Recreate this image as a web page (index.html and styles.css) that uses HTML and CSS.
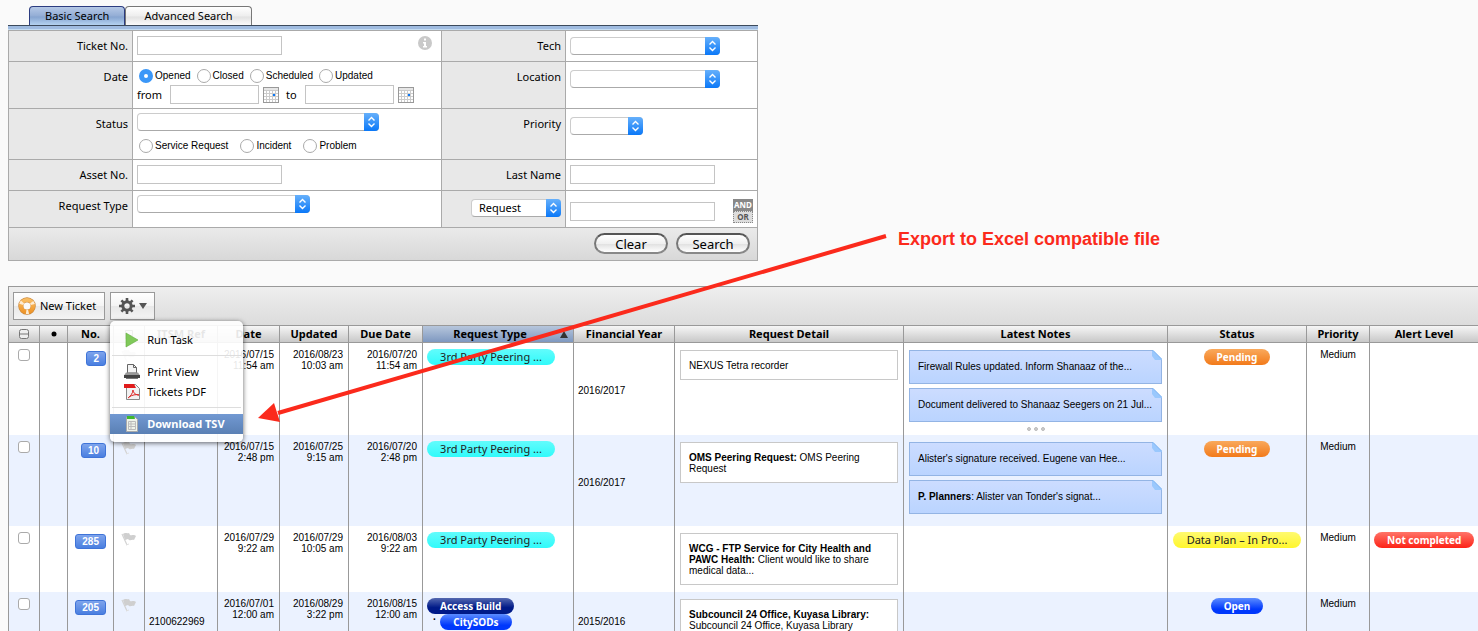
FILE: index.html
```
<!DOCTYPE html>
<html lang="en">
<head>
  <meta charset="UTF-8" />
  <title>Tickets</title>
  <link rel="stylesheet" href="styles.css">
</head>
<body>
  <svg class="sprite" width="0" height="0" aria-hidden="true">
    <defs>
      <linearGradient id="blue" x1="0" y1="0" x2="0" y2="1">
        <stop offset="0" stop-color="#66b0fb" />
        <stop offset="1" stop-color="#0a78f8" />
      </linearGradient>
      <linearGradient id="ring" x1="0" y1="0" x2="0" y2="1">
        <stop offset="0" stop-color="#f8bc62" />
        <stop offset="1" stop-color="#ef962a" />
      </linearGradient>
      <symbol id="updown" viewBox="0 0 15 18">
        <path d="M0 0h11a4 4 0 0 1 4 4v10a4 4 0 0 1-4 4H0z" fill="url(#blue)" />
        <path d="M4.500 7.500l3-3 3 3M4.500 10.500l3 3 3-3" fill="none" stroke="#fff" stroke-width="1.400" />
      </symbol>
      <symbol id="calendar" viewBox="0 0 16 16">
        <rect x=".5" y=".5" width="15" height="15" fill="#fff" stroke="#999" />
        <path d="M1 2h14" stroke="#e6e6e6" stroke-width="2" />
        <path d="M1 3.500h14M1 6.500h14M1 9.500h14M1 12.500h14M3.500 3v12M6.500 3v12M9.500 3v12M12.500 3v12" stroke="#ccc" />
        <rect x="10" y="7" width="2" height="2" fill="#0a78f8" />
      </symbol>
      <symbol id="flag" viewBox="0 0 16 15">
        <path d="M1 2l5 11" stroke="#d2d2d2" stroke-width="1.200" />
        <path d="M2 2c2-2 4 0 6-1l1 2c2 1 4-1 6 1l-2 4c-2-1-3 1-5 0l-1-1c-1 0-2 1-3 1z" fill="#cfcfcf" />
        <path d="M5 13l3-1" stroke="#e0e0e0" />
      </symbol>
      <symbol id="fold" viewBox="0 0 10 10">
        <path d="M0 0h10v10z" class="cut" />
        <path d="M0 0h1l9 9v1H3L0 6z" fill="#9ac8fd" />
        <path d="M0 .5h1l9 9" fill="none" stroke="#84b6f0" />
      </symbol>
    </defs>
  </svg>

  <form class="search">
    <div class="tabs">
      <button type="button" class="tab active">Basic Search</button>
      <button type="button" class="tab">Advanced Search</button>
    </div>
    <div class="tab-bar"></div>

    <div class="fields">
      <div class="name"><label for="ticket-no">Ticket No.</label></div>
      <div class="value split">
        <input type="text" class="box" id="ticket-no">
        <svg class="info" width="14" height="14" viewBox="0 0 14 14"><circle cx="7" cy="7" r="7" fill="#c9c9c9" /><path d="M6 2.500h2v2H6zM5 6h3v4h1v1.500H5V10h1V7.500H5z" fill="#fff" /></svg>
      </div>
      <div class="name"><label for="tech">Tech</label></div>
      <div class="value low">
        <span class="select"><select id="tech" class="medium"><option></option></select><svg width="15" height="18"><use href="#updown" /></svg></span>
      </div>

      <div class="name">Date</div>
      <div class="value date">
        <div class="radios">
          <label><input type="radio" name="date" checked>Opened</label>
          <label><input type="radio" name="date">Closed</label>
          <label><input type="radio" name="date">Scheduled</label>
          <label><input type="radio" name="date">Updated</label>
        </div>
        <div class="range">
          <label for="from">from</label>
          <input type="text" class="box short" id="from">
          <svg width="16" height="16"><use href="#calendar" /></svg>
          <label for="to">to</label>
          <input type="text" class="box short" id="to">
          <svg width="16" height="16"><use href="#calendar" /></svg>
        </div>
      </div>
      <div class="name"><label for="location">Location</label></div>
      <div class="value lower">
        <span class="select"><select id="location" class="medium"><option></option></select><svg width="15" height="18"><use href="#updown" /></svg></span>
      </div>

      <div class="name"><label for="status">Status</label></div>
      <div class="value status">
        <span class="select"><select id="status" class="wide"><option></option></select><svg width="15" height="18"><use href="#updown" /></svg></span>
        <div class="radios spaced">
          <label><input type="radio" name="kind">Service Request</label>
          <label><input type="radio" name="kind">Incident</label>
          <label><input type="radio" name="kind">Problem</label>
        </div>
      </div>
      <div class="name"><label for="priority">Priority</label></div>
      <div class="value lower">
        <span class="select"><select id="priority" class="small"><option></option></select><svg width="15" height="18"><use href="#updown" /></svg></span>
      </div>

      <div class="name"><label for="asset-no">Asset No.</label></div>
      <div class="value"><input type="text" class="box" id="asset-no"></div>
      <div class="name"><label for="last-name">Last Name</label></div>
      <div class="value"><input type="text" class="box" id="last-name"></div>

      <div class="name"><label for="request-type">Request Type</label></div>
      <div class="value status">
        <span class="select"><select id="request-type" class="large"><option></option></select><svg width="15" height="18"><use href="#updown" /></svg></span>
      </div>
      <div class="name">
        <span class="select"><select class="field" aria-label="Field"><option>Request</option></select><svg width="15" height="18"><use href="#updown" /></svg></span>
      </div>
      <div class="value split middle">
        <input type="text" class="box" aria-label="Request">
        <div class="andor"><button type="button" class="on">AND</button><button type="button">OR</button></div>
      </div>
    </div>

    <div class="actions">
      <button type="reset">Clear</button>
      <button type="submit">Search</button>
    </div>
  </form>

  <section class="results">
    <div class="toolbar">
      <button type="button" class="tool">
        <svg width="18" height="18" viewBox="0 0 18 18">
          <circle cx="9" cy="9" r="6" fill="none" stroke="#c9863a" stroke-width="5.500" />
          <circle cx="9" cy="9" r="6" fill="none" stroke="url(#ring)" stroke-width="4.200" />
          <circle cx="9" cy="9" r="6" fill="none" stroke="#fdebd2" stroke-width="4.200" stroke-dasharray="2.500 10.070" stroke-dashoffset="5" />
          <circle cx="9" cy="9" r="3.500" fill="#fafafa" />
        </svg>
        New Ticket
      </button>
      <div class="menu-wrap">
        <button type="button" class="tool gear" aria-label="Actions">
          <svg width="16" height="16" viewBox="0 0 16 16">
            <circle cx="8" cy="8" r="4.200" fill="none" stroke="#555" stroke-width="3" />
            <path d="M8 0v3M8 13v3M0 8h3M13 8h3M2.400 2.400l2 2M11.600 11.600l2 2M2.400 13.600l2-2M11.600 4.400l2-2" stroke="#555" stroke-width="2.600" />
          </svg>
          <svg width="8" height="6" viewBox="0 0 8 6"><path d="M0 0h8L4 6z" fill="#555" /></svg>
        </button>
        <div class="menu">
          <button type="button">
            <svg width="16" height="16" viewBox="0 0 16 16"><path d="M2 1l12 7-12 7z" fill="#80c95a" stroke="#62ad3e" stroke-width=".6" /></svg>
            Run Task
          </button>
          <hr>
          <button type="button">
            <svg width="16" height="16" viewBox="0 0 16 16"><path d="M3.500 9V.5h6l3 3V9z" fill="#f4f4f4" stroke="#666" /><path d="M9.500.5v3h3" fill="none" stroke="#666" /><path d="M2 8.500h12l2 3H0z" fill="#999" /><path d="M0 11h16v3H0z" fill="#444" /><path d="M2 14.500h12" stroke="#777" /></svg>
            Print View
          </button>
          <button type="button">
            <svg width="16" height="16" viewBox="0 0 16 16"><path d="M2.500.5h9l4 4v11h-13z" fill="#f2f2f2" stroke="#888" /><path d="M0 0h10l2 4H0z" fill="#e01b1b" /><path d="M4 14c2-1 5-5 5-8 0 3 3 5 6 5-3-1-7 0-10 2" fill="none" stroke="#d22" /></svg>
            Tickets PDF
          </button>
          <hr>
          <button type="button" class="selected">
            <svg width="16" height="16" viewBox="0 0 16 16"><path d="M2.500 1.500h9l2 2v12h-11z" fill="#eef3ea" stroke="#aaa" /><path d="M3 0h7l1 3H3z" fill="#3fb82f" /><path d="M4.500 5.500h7v8h-7zM4.500 8h7M4.500 10.500h7M7 5.500v8" fill="none" stroke="#bbb" /></svg>
            Download TSV
          </button>
        </div>
      </div>
    </div>

    <table>
      <colgroup>
        <col class="c-check"><col class="c-dot"><col class="c-no"><col class="c-flag"><col class="c-ref">
        <col class="c-date"><col class="c-updated"><col class="c-due"><col class="c-type"><col class="c-year">
        <col class="c-detail"><col class="c-notes"><col class="c-status"><col class="c-priority"><col>
      </colgroup>
      <thead>
        <tr>
          <th><svg width="10" height="10" viewBox="0 0 10 10"><rect x=".5" y=".5" width="9" height="9" rx="2" fill="#eee" stroke="#777" /><path d="M1 5h8" stroke="#777" /></svg></th>
          <th><svg width="6" height="6" viewBox="0 0 6 6"><circle cx="3" cy="3" r="2.500" /></svg></th>
          <th>No.</th>
          <th><svg width="8" height="9" viewBox="0 0 8 9"><path d="M.5 9V.5h7v5h-7" fill="none" stroke="#555" /></svg></th>
          <th>ITSM Ref</th>
          <th>Date</th>
          <th>Updated</th>
          <th>Due Date</th>
          <th class="sorted"><span>Request Type</span><svg width="8" height="7" viewBox="0 0 8 7"><path d="M0 7h8L4 0z" fill="#333" /></svg></th>
          <th>Financial Year</th>
          <th>Request Detail</th>
          <th>Latest Notes</th>
          <th>Status</th>
          <th>Priority</th>
          <th>Alert Level</th>
        </tr>
      </thead>
      <tbody>
        <tr>
          <td class="check"><input type="checkbox" aria-label="Ticket 2"></td>
          <td></td>
          <td class="no"><a href="#" class="badge">2</a></td>
          <td class="flag"><svg width="16" height="15"><use href="#flag" /></svg></td>
          <td class="mid"></td>
          <td class="when">2016/07/15<br>11:54 am</td>
          <td class="when">2016/08/23<br>10:03 am</td>
          <td class="when">2016/07/20<br>11:54 am</td>
          <td class="type"><span class="pill cyan">3rd Party Peering ...</span></td>
          <td class="mid">2016/2017</td>
          <td class="detail"><div class="card">NEXUS Tetra recorder</div></td>
          <td class="notes">
            <div class="note">Firewall Rules updated. Inform Shanaaz of the...<svg width="10" height="10"><use href="#fold" /></svg></div>
            <div class="note">Document delivered to Shanaaz Seegers on 21 Jul...<svg width="10" height="10"><use href="#fold" /></svg></div>
            <svg class="more" width="18" height="4" viewBox="0 0 18 4"><g fill="#ccc" stroke="#bbb"><circle cx="2" cy="2" r="1.500" /><circle cx="9" cy="2" r="1.500" /><circle cx="16" cy="2" r="1.500" /></g></svg>
          </td>
          <td class="center"><span class="pill orange">Pending</span></td>
          <td class="center">Medium</td>
          <td></td>
        </tr>
        <tr>
          <td class="check"><input type="checkbox" aria-label="Ticket 10"></td>
          <td></td>
          <td class="no"><a href="#" class="badge">10</a></td>
          <td class="flag"><svg width="16" height="15"><use href="#flag" /></svg></td>
          <td class="mid"></td>
          <td class="when">2016/07/15<br>2:48 pm</td>
          <td class="when">2016/07/25<br>9:15 am</td>
          <td class="when">2016/07/20<br>2:48 pm</td>
          <td class="type"><span class="pill cyan">3rd Party Peering ...</span></td>
          <td class="mid">2016/2017</td>
          <td class="detail"><div class="card"><b>OMS Peering Request:</b> OMS Peering Request</div></td>
          <td class="notes last">
            <div class="note">Alister's signature received. Eugene van Hee...<svg width="10" height="10"><use href="#fold" /></svg></div>
            <div class="note"><b>P. Planners</b>: Alister van Tonder's signat...<svg width="10" height="10"><use href="#fold" /></svg></div>
          </td>
          <td class="center"><span class="pill orange">Pending</span></td>
          <td class="center">Medium</td>
          <td></td>
        </tr>
        <tr>
          <td class="check"><input type="checkbox" aria-label="Ticket 285"></td>
          <td></td>
          <td class="no"><a href="#" class="badge">285</a></td>
          <td class="flag"><svg width="16" height="15"><use href="#flag" /></svg></td>
          <td class="mid"></td>
          <td class="when">2016/07/29<br>9:22 am</td>
          <td class="when">2016/07/29<br>10:05 am</td>
          <td class="when">2016/08/03<br>9:22 am</td>
          <td class="type"><span class="pill cyan">3rd Party Peering ...</span></td>
          <td class="mid"></td>
          <td class="detail"><div class="card"><b>WCG - FTP Service for City Health and PAWC Health:</b> Client would like to share medical data...</div></td>
          <td></td>
          <td class="center"><span class="pill yellow">Data Plan – In Pro...</span></td>
          <td class="center">Medium</td>
          <td class="center"><span class="pill red">Not completed</span></td>
        </tr>
        <tr>
          <td class="check"><input type="checkbox" aria-label="Ticket 205"></td>
          <td></td>
          <td class="no"><a href="#" class="badge">205</a></td>
          <td class="flag"><svg width="16" height="15"><use href="#flag" /></svg></td>
          <td class="mid">2100622969</td>
          <td class="when">2016/07/01<br>12:00 am</td>
          <td class="when">2016/08/29<br>3:22 pm</td>
          <td class="when">2016/08/15<br>12:00 am</td>
          <td class="type">
            <span class="pill navy">Access Build</span>
            <div class="sub"><span>·</span><span class="pill blue">CitySODs</span></div>
          </td>
          <td class="mid">2015/2016</td>
          <td class="detail"><div class="card"><b>Subcouncil 24 Office, Kuyasa Library:</b> Subcouncil 24 Office, Kuyasa Library</div></td>
          <td></td>
          <td class="center"><span class="pill blue">Open</span></td>
          <td class="center">Medium</td>
          <td></td>
        </tr>
      </tbody>
    </table>
  </section>

  <!-- callout for the export menu item -->
  <svg class="arrow" width="630" height="190" viewBox="0 0 630 190">
    <path d="M628 2L20 179" stroke="#fb2a1c" stroke-width="4" />
    <path d="M0 184l16-15 6 19z" fill="#fb2a1c" />
  </svg>
  <p class="callout">Export to Excel compatible file</p>
</body>
</html>
```
FILE: styles.css
```
* {
  box-sizing: border-box;
}

body {
  position: relative;
  height: 100vh;
  margin: 0;
  padding: 6px 0 0 8px;
  overflow: hidden;
  background: #fafafa;
  color: #000;
  font-family: "Noto Sans", "Open Sans", sans-serif;
  font-size: 11px;
  line-height: 14px;
}

button {
  margin: 0;
  padding: 0;
  border: none;
  background: none;
  color: #000;
  font: inherit;
}

svg {
  display: block;
}

.sprite {
  position: absolute;
}

/* search form */
.search {
  width: 750px;
}

.tabs {
  display: flex;
  padding-left: 21px;
}

.tab {
  height: 19px;
  padding: 0 18px;
  border: 1px solid #777;
  border-bottom: none;
  border-radius: 4px 4px 0 0;
  background: linear-gradient(#fff, #eee 50%, #e2e2e2 55%, #fafafa);
}

.tab.active {
  padding: 0 15px;
  border-color: #2c3c80;
  background: linear-gradient(#b5c8e6, #93add5 50%, #86a4d0 55%, #b4d2f0);
}

.tab-bar {
  height: 5px;
  border-top: 1px solid #3c4a5c;
  border-bottom: 1px solid #c4dcf2;
  background: #9fbbe0;
}

.fields {
  display: grid;
  grid-template-columns: 124px 309px 124px 1fr;
  border-right: 1px solid #aaa;
}

.name, .value {
  border-top: 1px solid #aaa;
  border-left: 1px solid #aaa;
}

.name {
  padding: 8px 4px 0;
  background: #e8e8e8;
  text-align: right;
}

.value {
  padding: 5px 4px 6px;
  background: #fff;
}

.value.low {
  padding-top: 6px;
}

.value.lower {
  padding-top: 8px;
}

.value.status {
  padding-top: 4px;
}

.value.date {
  padding: 7px 4px 4px;
}

.split {
  display: flex;
  justify-content: space-between;
}

.split .info {
  margin-right: 5px;
}

.value.middle {
  align-items: center;
  padding: 8px 4px 4px;
}

.box {
  display: block;
  width: 145px;
  height: 19px;
  margin: 0;
  border: 1px solid #c4c4c4;
  background: #fff;
}

.box.short {
  width: 89px;
}

.select {
  display: inline-grid;
  vertical-align: top;
}

.select select {
  grid-area: 1 / 1;
  height: 18px;
  padding: 0 7px;
  border: 1px solid #ccc;
  border-bottom-color: #aaa;
  border-radius: 4px;
  background: #fff;
  color: #000;
  font: inherit;
  line-height: 16px;
  appearance: none;
}

.select svg {
  grid-area: 1 / 1;
  justify-self: end;
  pointer-events: none;
}

.select .small { width: 73px; }
.select .field { width: 90px; }
.select .medium { width: 150px; }
.select .large { width: 173px; }
.select .wide { width: 242px; }

.radios {
  display: flex;
  gap: 6px;
  padding-left: 2px;
  font: 10px/14px "Liberation Sans", Arial, sans-serif;
}

.radios.spaced {
  gap: 12px;
  padding-top: 8px;
}

.radios label {
  display: flex;
  gap: 2px;
}

.radios input {
  width: 14px;
  height: 14px;
  margin: 0;
  border: 1px solid #aaa;
  border-radius: 50%;
  background: #fff;
  appearance: none;
}

.radios input:checked {
  border: 5px solid #3b97f8;
}

.range {
  display: flex;
  align-items: center;
  gap: 4px;
  padding-top: 2px;
}

.range .box {
  margin-left: 4px;
}

.range svg + label {
  margin-left: 3px;
}

.andor {
  display: flex;
  flex-direction: column;
  width: 20px;
}

.andor button {
  height: 12px;
  border: 1px dotted #888;
  background: #ddd;
  color: #555;
  font-size: 8px;
  font-weight: bold;
  line-height: 10px;
}

.andor .on {
  border-style: solid;
  background: #888;
  color: #fff;
}

.actions {
  display: flex;
  justify-content: flex-end;
  gap: 8px;
  padding: 5px 7px 6px;
  border: 1px solid #aaa;
  background: linear-gradient(#eaeaea, #d8d8d8);
}

.actions button {
  width: 74px;
  height: 21px;
  border: 2px solid #666;
  border-color: #555 #777 #888;
  border-radius: 11px;
  background: linear-gradient(#fff, #f0f0f0 50%, #e2e2e2 55%, #fff);
  font-size: 13px;
  line-height: 16px;
}

/* ticket list */
.results {
  margin-top: 25px;
  border-top: 1px solid #999;
  border-left: 1px solid #999;
}

.toolbar {
  display: flex;
  gap: 5px;
  padding: 5px 4px;
  background: linear-gradient(#eee, #dcdcdc);
}

.tool {
  display: flex;
  align-items: center;
  gap: 4px;
  height: 28px;
  padding: 0 8px 0 4px;
  border: 1px solid #999;
  background: linear-gradient(#fff, #f4f4f4 50%, #e8e8e8 50%, #f4f4f4);
}

.tool.gear {
  padding: 0 7px 0 8px;
}

.menu-wrap {
  position: relative;
}

.menu {
  position: absolute;
  top: 29px;
  left: 0;
  width: 133px;
  padding: 9px 0 8px;
  border-radius: 5px;
  background: rgba(255, 255, 255, 0.9);
  box-shadow: 0 1px 5px rgba(0, 0, 0, 0.6);
}

.menu button {
  display: flex;
  align-items: center;
  gap: 7px;
  width: 100%;
  height: 20px;
  padding-left: 14px;
  white-space: nowrap;
}

.menu hr {
  margin: 5px 2px 6px;
  border: none;
  border-top: 1px solid #ddd;
}

.menu .selected {
  background: linear-gradient(#7299d2, #5a80b4);
  color: #fff;
  font-weight: bold;
}

table {
  width: 100%;
  border-spacing: 0;
  table-layout: fixed;
  font: 10px/11px "Liberation Sans", Arial, sans-serif;
}

.c-check { width: 30px; }
.c-dot { width: 28px; }
.c-no { width: 46px; }
.c-flag { width: 31px; }
.c-ref { width: 73px; }
.c-date { width: 62px; }
.c-updated { width: 69px; }
.c-due { width: 74px; }
.c-type { width: 151px; }
.c-year { width: 101px; }
.c-detail { width: 229px; }
.c-notes { width: 264px; }
.c-status { width: 139px; }
.c-priority { width: 63px; }

th {
  height: 18px;
  padding: 0;
  border-top: 1px solid #999;
  border-bottom: 1px solid #999;
  background: linear-gradient(#f6f6f6, #c8c8c8);
  font: bold 11px/16px "Noto Sans", "Open Sans", sans-serif;
  white-space: nowrap;
}

th + th, td + td {
  border-left: 1px solid #999;
}

th svg {
  margin: 0 auto;
}

.sorted {
  position: relative;
  padding-right: 16px;
  background: linear-gradient(#b6c6dc, #7e98c0);
}

.sorted svg {
  position: absolute;
  top: 5px;
  right: 5px;
}

tbody tr {
  --row: #fff;
  background: var(--row);
}

tbody tr:nth-child(even) {
  --row: #ebf2ff;
}

td {
  padding: 6px 4px 0;
  vertical-align: top;
}

td.mid {
  padding-top: 3px;
  vertical-align: middle;
}

.check input {
  display: block;
  width: 12px;
  height: 12px;
  margin: 0 auto;
  border: 1px solid #aaa;
  border-radius: 3px;
  background: #fff;
  appearance: none;
}

td.no {
  padding: 8px 7px 0 0;
  text-align: right;
}

.badge {
  display: inline-block;
  padding: 0 6px;
  border: 1px solid #3f74d8;
  border-radius: 3px;
  background: linear-gradient(#7ea4ec, #4a7fe0);
  color: #fff;
  font-weight: bold;
  line-height: 13px;
  text-decoration: none;
}

td.flag {
  padding-left: 7px;
}

td.when {
  padding-right: 5px;
  text-align: right;
}

td.center {
  text-align: center;
}

.pill {
  display: block;
  width: fit-content;
  max-width: 128px;
  height: 16px;
  padding: 0 13px;
  border-radius: 8px;
  color: #fff;
  font: bold 10px/16px "Noto Sans", "Open Sans", sans-serif;
  text-align: center;
  white-space: nowrap;
}

.center .pill {
  margin: 0 auto;
}

.pill.cyan, .pill.yellow {
  width: 128px;
  padding: 0;
  color: #222;
  font-size: 11px;
  font-weight: normal;
}

.cyan { background: linear-gradient(#62fcfc, #30fafa); }
.yellow { background: linear-gradient(#fffa70, #fff62c); }
.orange { background: linear-gradient(#f9a95c, #f27a1a); }
.red { background: linear-gradient(#ff7468, #fd2216); }
.navy { background: linear-gradient(#5468b0, #001a88 60%); }
.blue { background: linear-gradient(#5c8cff, #0038fc 70%); }

.sub {
  display: flex;
  gap: 4px;
  padding-left: 6px;
  font-weight: bold;
}

td.detail, td.notes {
  padding: 7px 5px;
}

.card {
  padding: 9px 8px 8px;
  border: 1px solid #c8c8c8;
  background: #fff;
}

.notes .note {
  position: relative;
  height: 34px;
  margin-bottom: 4px;
  padding: 10px 8px;
  border: 1px solid #93b4e4;
  background: linear-gradient(#ccdcff, #bad4ff);
  white-space: nowrap;
}

.note svg {
  position: absolute;
  top: -1px;
  right: -1px;
}

.cut {
  fill: var(--row);
}

td.notes {
  padding-bottom: 4px;
}

td.notes.last {
  padding-bottom: 8px;
}

.more {
  margin: 5px auto 0;
}

/* callout */
.arrow {
  position: absolute;
  top: 234px;
  left: 258px;
  pointer-events: none;
}

.callout {
  position: absolute;
  top: 229px;
  left: 898px;
  margin: 0;
  color: #fb2a1c;
  font: bold 18px/20px "Liberation Sans", Arial, sans-serif;
}
```
